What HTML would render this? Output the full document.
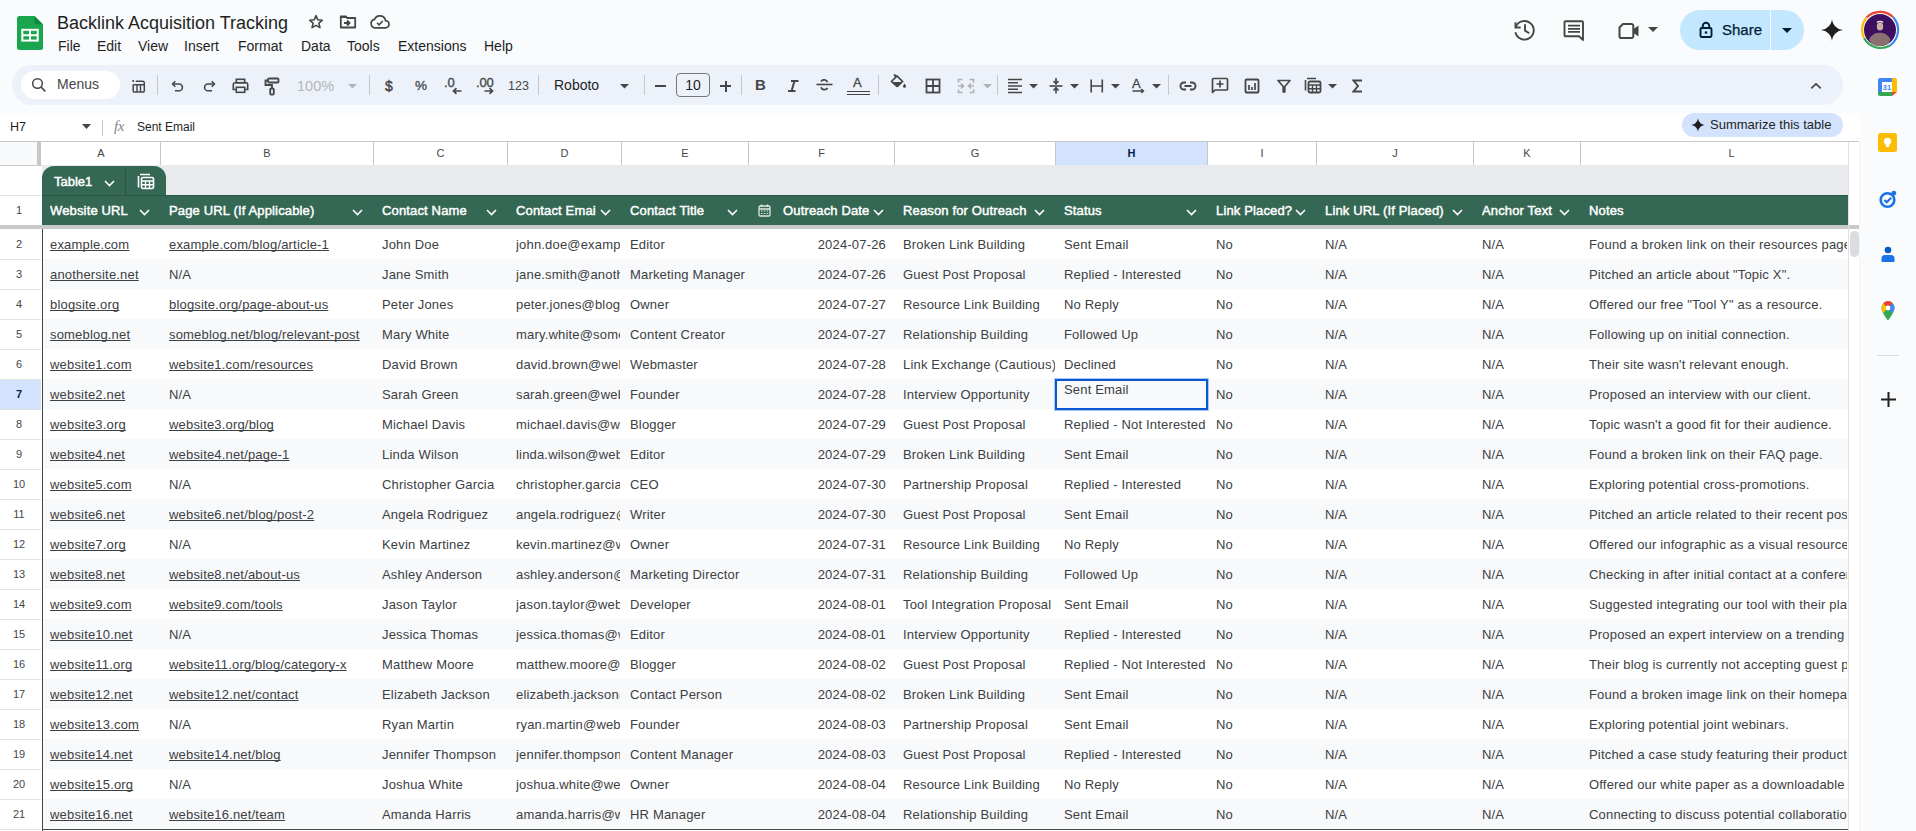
<!DOCTYPE html>
<html><head><meta charset="utf-8"><style>
*{margin:0;padding:0;box-sizing:border-box}
html,body{width:1916px;height:831px;overflow:hidden}
body{background:#f9fbfd;font-family:"Liberation Sans",sans-serif;position:relative;color:#1f1f1f}
.a{position:absolute}
.ch{top:142px;height:23px;line-height:23px;text-align:center;font-size:11px;color:#444746}
.chs{color:#041e49;font-weight:bold}
.rh{left:0;width:38px;height:30px;line-height:30px;text-align:center;font-size:11px;color:#444746}
.rhs{color:#041e49;font-weight:bold}
.tab{background:#356854;border-radius:12px 12px 0 0}
.tabt{height:30px;line-height:31px;font-size:13px;-webkit-text-stroke:0.45px #fff;color:#fff}
.hd{top:195px;height:30px;line-height:32px;font-size:13px;letter-spacing:0.15px;-webkit-text-stroke:0.45px #fff;color:#fff;white-space:nowrap;overflow:hidden}
.c{height:30px;line-height:32px;font-size:13px;letter-spacing:0.18px;color:#3c4043;white-space:nowrap;overflow:hidden}
.u span{text-decoration:underline;text-decoration-skip-ink:none}
.mi{top:36px;font-size:14px;line-height:20px;color:#1f1f1f}
.ic{stroke:#444746;fill:none;stroke-width:1.8}
</style></head><body>

<!-- logo -->
<svg class="a" style="left:17px;top:16px" width="26" height="34" viewBox="0 0 26 34"><path d="M2.5 0h15L26 8.5v23a2.5 2.5 0 0 1-2.5 2.5h-21A2.5 2.5 0 0 1 0 31.5v-29A2.5 2.5 0 0 1 2.5 0z" fill="#1aa64e"/><path d="M17.5 0L26 8.5h-6a2.5 2.5 0 0 1-2.5-2.5z" fill="#0c8a3c"/><rect x="5.3" y="13.8" width="15.4" height="10.8" fill="none" stroke="#fff" stroke-width="2"/><path d="M5 19.2h16M13 13.8v10.8" stroke="#fff" stroke-width="2"/></svg>
<div class="a" style="left:57px;top:11px;font-size:18px;line-height:24px;color:#1f1f1f">Backlink Acquisition Tracking</div>
<!-- star folder cloud -->
<svg class="a" style="left:307px;top:13px" width="18" height="18" viewBox="0 0 24 24"><path d="M12 3.5l2.4 5.6 6.1.5-4.6 4 1.4 6-5.3-3.2-5.3 3.2 1.4-6-4.6-4 6.1-.5z" fill="none" stroke="#444746" stroke-width="2.1" stroke-linejoin="round"/></svg>
<svg class="a" style="left:339px;top:15px" width="18" height="14" viewBox="0 0 18 14"><path d="M1.8 1.5h5l1.5 1.5h7.9v9.5H1.8z" fill="none" stroke="#444746" stroke-width="1.8" stroke-linejoin="round"/><path d="M1.8 1.5h5l1.5 1.5H1.8z" fill="#444746"/><path d="M5 8h4.5M8 5.5L10.5 8 8 10.5" fill="none" stroke="#444746" stroke-width="1.8"/></svg>
<svg class="a" style="left:370px;top:15px" width="20" height="14" viewBox="0 0 20 14"><path d="M5 12.8h10.2a3.6 3.6 0 0 0 .4-7.2A5.8 5.8 0 0 0 4.6 4.3 4.3 4.3 0 0 0 5 12.8z" fill="none" stroke="#444746" stroke-width="1.7"/><path d="M7 7.8l2 2 3.8-3.8" fill="none" stroke="#444746" stroke-width="1.6"/></svg>
<!-- menu -->
<div class="a mi" style="left:58px">File</div>
<div class="a mi" style="left:97px">Edit</div>
<div class="a mi" style="left:138px">View</div>
<div class="a mi" style="left:184px">Insert</div>
<div class="a mi" style="left:238px">Format</div>
<div class="a mi" style="left:301px">Data</div>
<div class="a mi" style="left:347px">Tools</div>
<div class="a mi" style="left:398px">Extensions</div>
<div class="a mi" style="left:484px">Help</div>
<!-- right header -->
<svg class="a" style="left:1512px;top:18px" width="26" height="24" viewBox="0 0 26 24"><path d="M3.6 9.5A9.3 9.3 0 1 1 3.4 14.3" fill="none" stroke="#444746" stroke-width="1.9"/><path d="M3.5 4.2v5.3h5.2" fill="none" stroke="#444746" stroke-width="1.9"/><path d="M13 6.3v6.3l4.3 2.6" fill="none" stroke="#444746" stroke-width="1.9"/></svg>
<svg class="a" style="left:1563px;top:20px" width="22" height="22" viewBox="0 0 22 22"><path d="M2.5 1.2h16.5a1 1 0 0 1 1 1V20l-4-3.7H2.5a1 1 0 0 1-1-1V2.2a1 1 0 0 1 1-1z" fill="none" stroke="#444746" stroke-width="1.9" stroke-linejoin="round"/><path d="M5 5.7h12M5 8.8h12M5 11.9h12" stroke="#444746" stroke-width="1.7"/></svg>
<svg class="a" style="left:1618px;top:22px" width="24" height="18" viewBox="0 0 24 18"><path d="M5 2h8.5a1.8 1.8 0 0 1 1.8 1.8v10.4a1.8 1.8 0 0 1-1.8 1.8H3.3a1.8 1.8 0 0 1-1.8-1.8V5.5z" fill="none" stroke="#444746" stroke-width="2" stroke-linejoin="round"/><path d="M15.5 7l5-3.5v11l-5-3.5z" fill="#444746"/></svg>
<svg class="a" style="left:1648px;top:27px" width="10" height="5" viewBox="0 0 10 5"><path d="M0 0h10L5 5z" fill="#444746"/></svg>
<div class="a" style="left:1680px;top:10px;width:124px;height:40px;border-radius:20px;background:#c2e7ff"></div>
<div class="a" style="left:1770px;top:10px;width:1px;height:40px;background:#f9fbfd"></div>
<svg class="a" style="left:1699px;top:21px" width="14" height="17" viewBox="0 0 14 17"><rect x="1.5" y="7" width="11" height="9" rx="1.2" fill="none" stroke="#001d35" stroke-width="1.9"/><path d="M3.8 7V5a3.2 3.2 0 0 1 6.4 0v2" fill="none" stroke="#001d35" stroke-width="1.9"/><circle cx="7" cy="11.5" r="1.3" fill="#001d35"/></svg>
<div class="a" style="left:1722px;top:20px;font-size:15px;line-height:20px;color:#001d35;-webkit-text-stroke:0.25px #001d35">Share</div>
<svg class="a" style="left:1782px;top:28px" width="10" height="5" viewBox="0 0 10 5"><path d="M0 0h10L5 5z" fill="#001d35"/></svg>
<svg class="a" style="left:1821px;top:19px" width="22" height="22" viewBox="0 0 24 24"><path d="M12 0C12.6 6.5 17.5 11.4 24 12 17.5 12.6 12.6 17.5 12 24 11.4 17.5 6.5 12.6 0 12 6.5 11.4 11.4 6.5 12 0z" fill="#1f1f1f"/></svg>
<svg class="a" style="left:1860px;top:10px" width="40" height="40" viewBox="0 0 40 40"><path d="M6.5 7.5A19 19 0 0 1 33 7" stroke="#ea4335" stroke-width="2.2" fill="none"/><path d="M33 7A19 19 0 0 1 30 35.5" stroke="#4285f4" stroke-width="2.2" fill="none"/><path d="M30 35.5A19 19 0 0 1 4 28" stroke="#34a853" stroke-width="2.2" fill="none"/><path d="M4 28A19 19 0 0 1 6.5 7.5" stroke="#fbbc04" stroke-width="2.2" fill="none"/><circle cx="20" cy="20" r="16" fill="#3d0f5e"/><path d="M9 30c1-3 2.5-4.5 5-6 2-1 4-1.2 6-1.2s4.5.5 6 1.5c2.2 1.6 3.5 3 4.5 5.5L28 34a16 16 0 0 1-16 0z" fill="#8a7070"/><ellipse cx="20" cy="16.5" rx="3.2" ry="4" fill="#c8b0a8"/><path d="M17 12.5c1-1.5 5-1.5 6 0" stroke="#e0d8d4" stroke-width="1.5" fill="none"/></svg>


<div class="a" style="left:12px;top:65px;width:1831px;height:40px;border-radius:20px;background:#edf2fa"></div>
<div class="a" style="left:21px;top:71px;width:99px;height:28px;border-radius:14px;background:#fff"></div>
<svg class="a" style="left:31px;top:77px" width="16" height="16" viewBox="0 0 16 16"><circle cx="6.5" cy="6.5" r="4.8" fill="none" stroke="#444746" stroke-width="1.5"/><path d="M10 10l4.3 4.3" stroke="#444746" stroke-width="1.7"/></svg>
<div class="a" style="left:57px;top:75px;font-size:14px;line-height:18px;color:#444746">Menus</div>
<svg class="a" style="left:131px;top:79px" width="15" height="14" viewBox="0 0 15 14"><circle cx="2.2" cy="2" r="1.1" fill="#444746"/><path d="M4.8 2.3h6.7a1.8 1.8 0 0 1 1.8 1.8v8a.8.8 0 0 1-.8.8H3a.8.8 0 0 1-.8-.8V5.6" fill="none" stroke="#444746" stroke-width="1.5"/><path d="M2.2 5.8h11M6 5.8v7M9.5 5.8v7" fill="none" stroke="#444746" stroke-width="1.4"/></svg>
<div class="a" style="left:157px;top:75px;width:1px;height:20px;background:#c7c7c7"></div>
<svg class="a" style="left:171px;top:80px" width="13" height="13" viewBox="0 0 13 13"><path d="M4.3 1.2L1.5 4l2.8 2.8" fill="none" stroke="#444746" stroke-width="1.6" stroke-linejoin="round"/><path d="M2 4h6a3.4 3.4 0 0 1 0 6.8H4" fill="none" stroke="#444746" stroke-width="1.6"/></svg>
<svg class="a" style="left:203px;top:80px" width="13" height="13" viewBox="0 0 13 13"><path d="M8.7 1.2L11.5 4 8.7 6.8" fill="none" stroke="#444746" stroke-width="1.6" stroke-linejoin="round"/><path d="M11 4H5a3.4 3.4 0 0 0 0 6.8h4" fill="none" stroke="#444746" stroke-width="1.6"/></svg>
<svg class="a" style="left:232px;top:78px" width="17" height="16" viewBox="0 0 17 16"><rect x="4.3" y="1.3" width="8.4" height="3.4" fill="none" stroke="#444746" stroke-width="1.6"/><path d="M3.8 11.5H1.3V6.2a1.4 1.4 0 0 1 1.4-1.4h11.6a1.4 1.4 0 0 1 1.4 1.4v5.3h-2.5" fill="none" stroke="#444746" stroke-width="1.6"/><rect x="4.3" y="9.3" width="8.4" height="5" fill="none" stroke="#444746" stroke-width="1.6"/></svg>
<svg class="a" style="left:264px;top:77px" width="16" height="19" viewBox="0 0 16 19"><rect x="4" y="1.5" width="10.5" height="4" rx="1" fill="none" stroke="#444746" stroke-width="1.8"/><path d="M4 3.5H1.5v4.5H8v3.5" fill="none" stroke="#444746" stroke-width="1.8"/><rect x="6.2" y="11.5" width="3.6" height="6" rx="1" fill="none" stroke="#444746" stroke-width="1.8"/></svg>
<div class="a" style="left:297px;top:77px;font-size:14.5px;line-height:18px;color:#b3b6b9">100%</div>
<svg class="a" style="left:348px;top:84px" width="9" height="5" viewBox="0 0 9 5"><path d="M0 0h9L4.5 4.5z" fill="#b3b6b9"/></svg>
<div class="a" style="left:369px;top:75px;width:1px;height:20px;background:#c7c7c7"></div>
<div class="a" style="left:385px;top:77px;font-size:14px;line-height:18px;color:#444746;-webkit-text-stroke:0.4px #444746">$</div>
<div class="a" style="left:415px;top:77px;font-size:13.5px;line-height:18px;color:#444746;-webkit-text-stroke:0.3px #444746">%</div>
<div class="a" style="left:444px;top:75px;font-size:13px;line-height:16px;color:#444746;-webkit-text-stroke:0.35px #444746">.0</div>
<svg class="a" style="left:452px;top:87px" width="10" height="8" viewBox="0 0 10 8"><path d="M9.5 4H2M4.5 1.2L1.5 4l3 2.8" fill="none" stroke="#444746" stroke-width="1.7"/></svg>
<div class="a" style="left:476px;top:75px;font-size:13px;line-height:16px;color:#444746;-webkit-text-stroke:0.35px #444746;letter-spacing:-0.2px">.00</div>
<svg class="a" style="left:484px;top:87px" width="10" height="8" viewBox="0 0 10 8"><path d="M0.5 4H8M5.5 1.2L8.5 4l-3 2.8" fill="none" stroke="#444746" stroke-width="1.7"/></svg>
<div class="a" style="left:508px;top:77px;font-size:12.5px;line-height:18px;color:#444746">123</div>
<div class="a" style="left:538px;top:75px;width:1px;height:20px;background:#c7c7c7"></div>
<div class="a" style="left:554px;top:76px;font-size:14px;line-height:18px;color:#1f1f1f">Roboto</div>
<svg class="a" style="left:620px;top:84px" width="9" height="5" viewBox="0 0 9 5"><path d="M0 0h9L4.5 4.5z" fill="#444746"/></svg>
<div class="a" style="left:644px;top:75px;width:1px;height:20px;background:#c7c7c7"></div>
<div class="a" style="left:655px;top:85px;width:11px;height:2px;background:#444746"></div>
<div class="a" style="left:676px;top:73px;width:34px;height:24px;border:1px solid #747775;border-radius:4px;font-size:14px;line-height:22px;text-align:center;color:#1f1f1f">10</div>
<div class="a" style="left:720px;top:85px;width:11px;height:2px;background:#444746"></div>
<div class="a" style="left:724.5px;top:80.5px;width:2px;height:11px;background:#444746"></div>
<div class="a" style="left:741px;top:75px;width:1px;height:20px;background:#c7c7c7"></div>
<div class="a" style="left:755px;top:76px;font-size:15px;line-height:18px;color:#444746;font-weight:bold">B</div>
<svg class="a" style="left:787px;top:80px" width="12" height="12" viewBox="0 0 12 12"><path d="M4 1h7.5M1 11h7.5M7.5 1L4.5 11" fill="none" stroke="#444746" stroke-width="2"/></svg>
<svg class="a" style="left:816px;top:79px" width="17" height="13" viewBox="0 0 17 13"><path d="M0.5 5.5h16" stroke="#444746" stroke-width="1.6"/><path d="M11.5 3.2A3.5 3 0 0 0 5 2.5M5 8.2a3.5 3 0 0 0 6.6 0.6" fill="none" stroke="#444746" stroke-width="1.8"/></svg>
<div class="a" style="left:853px;top:76px;font-size:13px;line-height:13px;color:#444746;-webkit-text-stroke:0.3px #444746">A</div>
<div class="a" style="left:847px;top:90.5px;width:23px;height:4.5px;border-top:1.5px solid #444746;border-bottom:1.5px solid #444746"></div>
<div class="a" style="left:878px;top:75px;width:1px;height:20px;background:#c7c7c7"></div>
<svg class="a" style="left:890px;top:73px" width="17" height="16" viewBox="0 0 17 16"><path d="M4 1.5l2.5 2.5" stroke="#444746" stroke-width="1.8"/><path d="M1.5 8.5L7 3l5.5 5.5L8 13a1.2 1.2 0 0 1-1.7 0L1.5 8.5z" fill="none" stroke="#444746" stroke-width="1.7"/><path d="M2 9h10L8 13H6z" fill="#444746"/><path d="M14.5 10.5c1 1.3 1.5 2.2 1.5 2.8a1.5 1.5 0 0 1-3 0c0-.6.5-1.5 1.5-2.8z" fill="#444746"/></svg>
<svg class="a" style="left:925px;top:78px" width="16" height="16" viewBox="0 0 16 16"><rect x="1.5" y="1.5" width="13" height="13" fill="none" stroke="#444746" stroke-width="1.8"/><path d="M8 1.5v13M1.5 8h13" fill="none" stroke="#444746" stroke-width="1.8"/></svg>
<svg class="a" style="left:957px;top:78px" width="18" height="16" viewBox="0 0 18 16"><path d="M1.5 4.5V1.5h4M12.5 1.5h4v3M1.5 11.5v3h4M12.5 14.5h4v-3" fill="none" stroke="#b0b3b5" stroke-width="1.7"/><path d="M1 8h5M4 5.5L6.5 8 4 10.5M17 8h-5M14 5.5L11.5 8l2.5 2.5" fill="none" stroke="#b0b3b5" stroke-width="1.6"/></svg>
<svg class="a" style="left:983px;top:84px" width="9" height="5" viewBox="0 0 9 5"><path d="M0 0h9L4.5 4.5z" fill="#b0b3b5"/></svg>
<div class="a" style="left:997px;top:75px;width:1px;height:20px;background:#c7c7c7"></div>
<svg class="a" style="left:1007px;top:78px" width="16" height="16" viewBox="0 0 16 16"><path d="M1 1.5h14M1 4.8h10M1 8h14M1 11.2h10M1 14.5h14" stroke="#444746" stroke-width="1.6"/></svg>
<svg class="a" style="left:1029px;top:84px" width="9" height="5" viewBox="0 0 9 5"><path d="M0 0h9L4.5 4.5z" fill="#444746"/></svg>
<svg class="a" style="left:1049px;top:77px" width="14" height="17" viewBox="0 0 14 17"><path d="M0.5 9h13" stroke="#444746" stroke-width="1.6"/><path d="M7 1v5M4.5 4L7 6.8 9.5 4M7 16.5v-5M4.5 13.5L7 10.8l2.5 2.7" fill="none" stroke="#444746" stroke-width="1.6"/></svg>
<svg class="a" style="left:1070px;top:84px" width="9" height="5" viewBox="0 0 9 5"><path d="M0 0h9L4.5 4.5z" fill="#444746"/></svg>
<svg class="a" style="left:1090px;top:79px" width="14" height="14" viewBox="0 0 14 14"><path d="M1.2 0.5v13M12.3 0.5v13M1.2 7h11.1" stroke="#444746" stroke-width="1.6"/></svg>
<svg class="a" style="left:1111px;top:84px" width="9" height="5" viewBox="0 0 9 5"><path d="M0 0h9L4.5 4.5z" fill="#444746"/></svg>
<div class="a" style="left:1132px;top:77px;font-size:13px;line-height:13px;color:#444746;-webkit-text-stroke:0.3px #444746">A</div>
<svg class="a" style="left:1132px;top:88px" width="14" height="6" viewBox="0 0 14 6"><path d="M0.5 3h11M9.3 1L11.5 3 9.3 5" fill="none" stroke="#444746" stroke-width="1.4"/></svg>
<svg class="a" style="left:1152px;top:84px" width="9" height="5" viewBox="0 0 9 5"><path d="M0 0h9L4.5 4.5z" fill="#444746"/></svg>
<div class="a" style="left:1168px;top:75px;width:1px;height:20px;background:#c7c7c7"></div>
<svg class="a" style="left:1179px;top:81px" width="18" height="10" viewBox="0 0 18 10"><path d="M7 1.5H5a3.5 3.5 0 0 0 0 7h2M11 1.5h2a3.5 3.5 0 0 1 0 7h-2M5.5 5h7" fill="none" stroke="#444746" stroke-width="1.9"/></svg>
<svg class="a" style="left:1211px;top:77px" width="18" height="17" viewBox="0 0 18 17"><path d="M1.5 15.5V2.5a1 1 0 0 1 1-1h13a1 1 0 0 1 1 1V12a1 1 0 0 1-1 1H4z" fill="none" stroke="#444746" stroke-width="1.7" stroke-linejoin="round"/><path d="M9 3.5v7M5.5 7h7" stroke="#444746" stroke-width="1.7"/></svg>
<svg class="a" style="left:1244px;top:78px" width="16" height="16" viewBox="0 0 16 16"><rect x="1.5" y="1.5" width="13" height="13" rx="1" fill="none" stroke="#444746" stroke-width="1.8"/><path d="M5 7v5M8 9v3M11 5v7" stroke="#444746" stroke-width="1.7"/></svg>
<svg class="a" style="left:1277px;top:79px" width="14" height="14" viewBox="0 0 14 14"><path d="M1 1.5h12L7.8 7.5V13H6.2V7.5z" fill="none" stroke="#444746" stroke-width="1.7" stroke-linejoin="round"/></svg>
<svg class="a" style="left:1304px;top:77px" width="18" height="17" viewBox="0 0 18 17"><path d="M3 1.5h9M1.5 3v10.5" fill="none" stroke="#444746" stroke-width="1.6"/><rect x="4.5" y="4.5" width="12" height="11" rx="1.5" fill="none" stroke="#444746" stroke-width="1.8"/><path d="M4.5 8h12M8.5 8v7.5M12.5 8v7.5M4.5 11.7h12" stroke="#444746" stroke-width="1.4"/></svg>
<svg class="a" style="left:1328px;top:84px" width="9" height="5" viewBox="0 0 9 5"><path d="M0 0h9L4.5 4.5z" fill="#444746"/></svg>
<svg class="a" style="left:1352px;top:79px" width="11" height="14" viewBox="0 0 11 14"><path d="M10 1.5H1.5L6 7l-4.5 5.5H10" fill="none" stroke="#444746" stroke-width="1.9" stroke-linejoin="miter"/></svg>
<svg class="a" style="left:1810px;top:82px" width="12" height="8" viewBox="0 0 12 8"><path d="M1.2 6.3L6 1.8l4.8 4.5" fill="none" stroke="#444746" stroke-width="1.6"/></svg>
<div class="a" style="left:0;top:113px;width:1860px;height:28px;background:#fff"></div>
<div class="a" style="left:10px;top:119px;font-size:12.5px;line-height:16px;color:#1f1f1f">H7</div>
<svg class="a" style="left:82px;top:124px" width="9" height="5" viewBox="0 0 9 5"><path d="M0 0h9L4.5 5z" fill="#444746"/></svg>
<div class="a" style="left:102px;top:120px;width:1px;height:16px;background:#c7c7c7"></div>
<div class="a" style="left:114px;top:117px;font-size:15px;line-height:18px;color:#80868b;font-family:'Liberation Serif',serif;font-style:italic;letter-spacing:-0.5px">fx</div>
<div class="a" style="left:137px;top:119px;font-size:12px;line-height:16px;color:#1f1f1f">Sent Email</div>
<div class="a" style="left:1682px;top:113px;width:161px;height:24px;border-radius:12px;background:#d3e3fd"></div>
<svg class="a" style="left:1691px;top:118px" width="14" height="14" viewBox="0 0 24 24"><path d="M12 0C12.6 6.5 17.5 11.4 24 12 17.5 12.6 12.6 17.5 12 24 11.4 17.5 6.5 12.6 0 12 6.5 11.4 11.4 6.5 12 0z" fill="#1f1f1f"/></svg>
<div class="a" style="left:1710px;top:117px;font-size:13px;line-height:16px;color:#1f1f1f">Summarize this table</div>
<div class="a" style="left:0;top:141px;width:1860px;height:690px;background:#fff"></div>
<div class="a" style="left:0;top:142px;width:37px;height:23px;background:#f8f9fa"></div>
<div class="a" style="left:37px;top:142px;width:4px;height:23px;background:#c7c7c7"></div>
<div class="a" style="left:0;top:141px;width:1860px;height:1px;background:#c7c7c7"></div>
<div class="a" style="left:0;top:165px;width:1848px;height:1px;background:#c7c7c7"></div>
<div class="a ch" style="left:42px;width:118px;background:#fff"></div>
<div class="a ch" style="left:42px;width:118px">A</div>
<div class="a" style="left:160px;top:142px;width:1px;height:23px;background:#c7c7c7"></div>
<div class="a ch" style="left:161px;width:212px;background:#fff"></div>
<div class="a ch" style="left:161px;width:212px">B</div>
<div class="a" style="left:373px;top:142px;width:1px;height:23px;background:#c7c7c7"></div>
<div class="a ch" style="left:374px;width:133px;background:#fff"></div>
<div class="a ch" style="left:374px;width:133px">C</div>
<div class="a" style="left:507px;top:142px;width:1px;height:23px;background:#c7c7c7"></div>
<div class="a ch" style="left:508px;width:113px;background:#fff"></div>
<div class="a ch" style="left:508px;width:113px">D</div>
<div class="a" style="left:621px;top:142px;width:1px;height:23px;background:#c7c7c7"></div>
<div class="a ch" style="left:622px;width:126px;background:#fff"></div>
<div class="a ch" style="left:622px;width:126px">E</div>
<div class="a" style="left:748px;top:142px;width:1px;height:23px;background:#c7c7c7"></div>
<div class="a ch" style="left:749px;width:145px;background:#fff"></div>
<div class="a ch" style="left:749px;width:145px">F</div>
<div class="a" style="left:894px;top:142px;width:1px;height:23px;background:#c7c7c7"></div>
<div class="a ch" style="left:895px;width:160px;background:#fff"></div>
<div class="a ch" style="left:895px;width:160px">G</div>
<div class="a" style="left:1055px;top:142px;width:1px;height:23px;background:#c7c7c7"></div>
<div class="a ch chs" style="left:1056px;width:151px;background:#d3e3fd"></div>
<div class="a ch chs" style="left:1056px;width:151px">H</div>
<div class="a" style="left:1207px;top:142px;width:1px;height:23px;background:#c7c7c7"></div>
<div class="a ch" style="left:1208px;width:108px;background:#fff"></div>
<div class="a ch" style="left:1208px;width:108px">I</div>
<div class="a" style="left:1316px;top:142px;width:1px;height:23px;background:#c7c7c7"></div>
<div class="a ch" style="left:1317px;width:156px;background:#fff"></div>
<div class="a ch" style="left:1317px;width:156px">J</div>
<div class="a" style="left:1473px;top:142px;width:1px;height:23px;background:#c7c7c7"></div>
<div class="a ch" style="left:1474px;width:106px;background:#fff"></div>
<div class="a ch" style="left:1474px;width:106px">K</div>
<div class="a" style="left:1580px;top:142px;width:1px;height:23px;background:#c7c7c7"></div>
<div class="a ch" style="left:1581px;width:267px;background:#fff"></div>
<div class="a ch" style="left:1581px;width:301px">L</div>
<div class="a" style="left:1848px;top:142px;width:1px;height:23px;background:#c7c7c7"></div>
<div class="a" style="left:0;top:195px;width:41px;height:1px;background:#e1e1e1"></div>
<div class="a rh" style="top:195px">1</div>
<div class="a rh" style="top:229px">2</div>
<div class="a" style="left:0;top:259px;width:41px;height:1px;background:#e1e1e1"></div>
<div class="a rh" style="top:259px">3</div>
<div class="a" style="left:0;top:289px;width:41px;height:1px;background:#e1e1e1"></div>
<div class="a rh" style="top:289px">4</div>
<div class="a" style="left:0;top:319px;width:41px;height:1px;background:#e1e1e1"></div>
<div class="a rh" style="top:319px">5</div>
<div class="a" style="left:0;top:349px;width:41px;height:1px;background:#e1e1e1"></div>
<div class="a rh" style="top:349px">6</div>
<div class="a" style="left:0;top:379px;width:41px;height:1px;background:#e1e1e1"></div>
<div class="a" style="left:0;top:380px;width:41px;height:29px;background:#d3e3fd"></div>
<div class="a rh rhs" style="top:379px">7</div>
<div class="a" style="left:0;top:409px;width:41px;height:1px;background:#e1e1e1"></div>
<div class="a rh" style="top:409px">8</div>
<div class="a" style="left:0;top:439px;width:41px;height:1px;background:#e1e1e1"></div>
<div class="a rh" style="top:439px">9</div>
<div class="a" style="left:0;top:469px;width:41px;height:1px;background:#e1e1e1"></div>
<div class="a rh" style="top:469px">10</div>
<div class="a" style="left:0;top:499px;width:41px;height:1px;background:#e1e1e1"></div>
<div class="a rh" style="top:499px">11</div>
<div class="a" style="left:0;top:529px;width:41px;height:1px;background:#e1e1e1"></div>
<div class="a rh" style="top:529px">12</div>
<div class="a" style="left:0;top:559px;width:41px;height:1px;background:#e1e1e1"></div>
<div class="a rh" style="top:559px">13</div>
<div class="a" style="left:0;top:589px;width:41px;height:1px;background:#e1e1e1"></div>
<div class="a rh" style="top:589px">14</div>
<div class="a" style="left:0;top:619px;width:41px;height:1px;background:#e1e1e1"></div>
<div class="a rh" style="top:619px">15</div>
<div class="a" style="left:0;top:649px;width:41px;height:1px;background:#e1e1e1"></div>
<div class="a rh" style="top:649px">16</div>
<div class="a" style="left:0;top:679px;width:41px;height:1px;background:#e1e1e1"></div>
<div class="a rh" style="top:679px">17</div>
<div class="a" style="left:0;top:709px;width:41px;height:1px;background:#e1e1e1"></div>
<div class="a rh" style="top:709px">18</div>
<div class="a" style="left:0;top:739px;width:41px;height:1px;background:#e1e1e1"></div>
<div class="a rh" style="top:739px">19</div>
<div class="a" style="left:0;top:769px;width:41px;height:1px;background:#e1e1e1"></div>
<div class="a rh" style="top:769px">20</div>
<div class="a" style="left:0;top:799px;width:41px;height:1px;background:#e1e1e1"></div>
<div class="a rh" style="top:799px">21</div>
<div class="a" style="left:0;top:829px;width:41px;height:1px;background:#e1e1e1"></div>
<div class="a" style="left:42px;top:165px;width:1806px;height:30px;background:#e8eaed"></div>
<div class="a tab" style="left:42px;top:166px;width:124px;height:30px"></div>
<div class="a" style="left:125px;top:168px;width:1px;height:27px;background:#2a5541"></div>
<div class="a tabt" style="left:54px;top:166px">Table1</div>
<svg class="a" style="left:104px;top:180px" width="11" height="7" viewBox="0 0 11 7"><path d="M1 1l4.5 4.5L10 1" fill="none" stroke="#fff" stroke-width="1.6"/></svg>
<svg class="a" style="left:137px;top:173px" width="18" height="17" viewBox="0 0 18 17"><path d="M3 1.5h10M1.5 3v11.5" fill="none" stroke="#fff" stroke-width="1.6"/><rect x="4.5" y="4.5" width="12" height="11" rx="1.5" fill="none" stroke="#fff" stroke-width="1.6"/><path d="M4.5 8h12M8.5 8v7.5M12.5 8v7.5M4.5 11.7h12" stroke="#fff" stroke-width="1.4"/></svg>
<div class="a" style="left:42px;top:195px;width:1806px;height:31px;background:#356854;border-top:1px solid #2b5743"></div>
<div class="a hd" style="left:50px;width:87px">Website URL</div>
<svg class="a" style="left:139px;top:209px" width="11" height="7" viewBox="0 0 11 7"><path d="M1 1l4.5 4.5L10 1" fill="none" stroke="#fff" stroke-width="1.6"/></svg>
<div class="a hd" style="left:169px;width:181px">Page URL (If Applicable)</div>
<svg class="a" style="left:352px;top:209px" width="11" height="7" viewBox="0 0 11 7"><path d="M1 1l4.5 4.5L10 1" fill="none" stroke="#fff" stroke-width="1.6"/></svg>
<div class="a hd" style="left:382px;width:102px">Contact Name</div>
<svg class="a" style="left:486px;top:209px" width="11" height="7" viewBox="0 0 11 7"><path d="M1 1l4.5 4.5L10 1" fill="none" stroke="#fff" stroke-width="1.6"/></svg>
<div class="a hd" style="left:516px;width:82px">Contact Emai</div>
<svg class="a" style="left:600px;top:209px" width="11" height="7" viewBox="0 0 11 7"><path d="M1 1l4.5 4.5L10 1" fill="none" stroke="#fff" stroke-width="1.6"/></svg>
<div class="a hd" style="left:630px;width:95px">Contact Title</div>
<svg class="a" style="left:727px;top:209px" width="11" height="7" viewBox="0 0 11 7"><path d="M1 1l4.5 4.5L10 1" fill="none" stroke="#fff" stroke-width="1.6"/></svg>
<svg class="a" style="left:758px;top:204px" width="13" height="13" viewBox="0 0 13 13"><rect x="1" y="2" width="11" height="10" rx="1.2" fill="none" stroke="#dfe9e3" stroke-width="1.3"/><path d="M1 5h11M3.5 0.5v2.5M9.5 0.5v2.5" stroke="#dfe9e3" stroke-width="1.3"/><path d="M3 7h1.5M5.8 7h1.5M8.6 7h1.5M3 9.5h1.5M5.8 9.5h1.5M8.6 9.5h1.5" stroke="#dfe9e3" stroke-width="1.2"/></svg>
<div class="a hd" style="left:783px;width:88px">Outreach Date</div>
<svg class="a" style="left:873px;top:209px" width="11" height="7" viewBox="0 0 11 7"><path d="M1 1l4.5 4.5L10 1" fill="none" stroke="#fff" stroke-width="1.6"/></svg>
<div class="a hd" style="left:903px;width:129px">Reason for Outreach</div>
<svg class="a" style="left:1034px;top:209px" width="11" height="7" viewBox="0 0 11 7"><path d="M1 1l4.5 4.5L10 1" fill="none" stroke="#fff" stroke-width="1.6"/></svg>
<div class="a hd" style="left:1064px;width:120px">Status</div>
<svg class="a" style="left:1186px;top:209px" width="11" height="7" viewBox="0 0 11 7"><path d="M1 1l4.5 4.5L10 1" fill="none" stroke="#fff" stroke-width="1.6"/></svg>
<div class="a hd" style="left:1216px;width:77px">Link Placed?</div>
<svg class="a" style="left:1295px;top:209px" width="11" height="7" viewBox="0 0 11 7"><path d="M1 1l4.5 4.5L10 1" fill="none" stroke="#fff" stroke-width="1.6"/></svg>
<div class="a hd" style="left:1325px;width:125px">Link URL (If Placed)</div>
<svg class="a" style="left:1452px;top:209px" width="11" height="7" viewBox="0 0 11 7"><path d="M1 1l4.5 4.5L10 1" fill="none" stroke="#fff" stroke-width="1.6"/></svg>
<div class="a hd" style="left:1482px;width:75px">Anchor Text</div>
<svg class="a" style="left:1559px;top:209px" width="11" height="7" viewBox="0 0 11 7"><path d="M1 1l4.5 4.5L10 1" fill="none" stroke="#fff" stroke-width="1.6"/></svg>
<div class="a hd" style="left:1589px;width:259px">Notes</div>
<div class="a" style="left:0;top:225px;width:1860px;height:4px;background:#c9c9c9"></div>
<div class="a" style="left:43px;top:229px;width:1805px;height:30px;background:#ffffff"></div>
<div class="a c u" style="left:50px;top:229px;width:110px"><span>example.com</span></div>
<div class="a c u" style="left:169px;top:229px;width:204px"><span>example.com/blog/article-1</span></div>
<div class="a c" style="left:382px;top:229px;width:125px"><span>John Doe</span></div>
<div class="a c" style="left:516px;top:229px;width:104px"><span>john.doe@example.com</span></div>
<div class="a c" style="left:630px;top:229px;width:118px"><span>Editor</span></div>
<div class="a c" style="left:748px;top:229px;width:138px;text-align:right"><span>2024-07-26</span></div>
<div class="a c" style="left:903px;top:229px;width:152px"><span>Broken Link Building</span></div>
<div class="a c" style="left:1064px;top:229px;width:143px"><span>Sent Email</span></div>
<div class="a c" style="left:1216px;top:229px;width:100px"><span>No</span></div>
<div class="a c" style="left:1325px;top:229px;width:148px"><span>N/A</span></div>
<div class="a c" style="left:1482px;top:229px;width:98px"><span>N/A</span></div>
<div class="a c" style="left:1589px;top:229px;width:258px"><span>Found a broken link on their resources page.</span></div>
<div class="a" style="left:43px;top:259px;width:1805px;height:30px;background:#f8f9fa"></div>
<div class="a c u" style="left:50px;top:259px;width:110px"><span>anothersite.net</span></div>
<div class="a c" style="left:169px;top:259px;width:204px"><span>N/A</span></div>
<div class="a c" style="left:382px;top:259px;width:125px"><span>Jane Smith</span></div>
<div class="a c" style="left:516px;top:259px;width:104px"><span>jane.smith@anothersite.net</span></div>
<div class="a c" style="left:630px;top:259px;width:118px"><span>Marketing Manager</span></div>
<div class="a c" style="left:748px;top:259px;width:138px;text-align:right"><span>2024-07-26</span></div>
<div class="a c" style="left:903px;top:259px;width:152px"><span>Guest Post Proposal</span></div>
<div class="a c" style="left:1064px;top:259px;width:143px"><span>Replied - Interested</span></div>
<div class="a c" style="left:1216px;top:259px;width:100px"><span>No</span></div>
<div class="a c" style="left:1325px;top:259px;width:148px"><span>N/A</span></div>
<div class="a c" style="left:1482px;top:259px;width:98px"><span>N/A</span></div>
<div class="a c" style="left:1589px;top:259px;width:258px"><span>Pitched an article about &quot;Topic X&quot;.</span></div>
<div class="a" style="left:43px;top:289px;width:1805px;height:30px;background:#ffffff"></div>
<div class="a c u" style="left:50px;top:289px;width:110px"><span>blogsite.org</span></div>
<div class="a c u" style="left:169px;top:289px;width:204px"><span>blogsite.org/page-about-us</span></div>
<div class="a c" style="left:382px;top:289px;width:125px"><span>Peter Jones</span></div>
<div class="a c" style="left:516px;top:289px;width:104px"><span>peter.jones@blogsite.org</span></div>
<div class="a c" style="left:630px;top:289px;width:118px"><span>Owner</span></div>
<div class="a c" style="left:748px;top:289px;width:138px;text-align:right"><span>2024-07-27</span></div>
<div class="a c" style="left:903px;top:289px;width:152px"><span>Resource Link Building</span></div>
<div class="a c" style="left:1064px;top:289px;width:143px"><span>No Reply</span></div>
<div class="a c" style="left:1216px;top:289px;width:100px"><span>No</span></div>
<div class="a c" style="left:1325px;top:289px;width:148px"><span>N/A</span></div>
<div class="a c" style="left:1482px;top:289px;width:98px"><span>N/A</span></div>
<div class="a c" style="left:1589px;top:289px;width:258px"><span>Offered our free &quot;Tool Y&quot; as a resource.</span></div>
<div class="a" style="left:43px;top:319px;width:1805px;height:30px;background:#f8f9fa"></div>
<div class="a c u" style="left:50px;top:319px;width:110px"><span>someblog.net</span></div>
<div class="a c u" style="left:169px;top:319px;width:204px"><span>someblog.net/blog/relevant-post</span></div>
<div class="a c" style="left:382px;top:319px;width:125px"><span>Mary White</span></div>
<div class="a c" style="left:516px;top:319px;width:104px"><span>mary.white@someblog.net</span></div>
<div class="a c" style="left:630px;top:319px;width:118px"><span>Content Creator</span></div>
<div class="a c" style="left:748px;top:319px;width:138px;text-align:right"><span>2024-07-27</span></div>
<div class="a c" style="left:903px;top:319px;width:152px"><span>Relationship Building</span></div>
<div class="a c" style="left:1064px;top:319px;width:143px"><span>Followed Up</span></div>
<div class="a c" style="left:1216px;top:319px;width:100px"><span>No</span></div>
<div class="a c" style="left:1325px;top:319px;width:148px"><span>N/A</span></div>
<div class="a c" style="left:1482px;top:319px;width:98px"><span>N/A</span></div>
<div class="a c" style="left:1589px;top:319px;width:258px"><span>Following up on initial connection.</span></div>
<div class="a" style="left:43px;top:349px;width:1805px;height:30px;background:#ffffff"></div>
<div class="a c u" style="left:50px;top:349px;width:110px"><span>website1.com</span></div>
<div class="a c u" style="left:169px;top:349px;width:204px"><span>website1.com/resources</span></div>
<div class="a c" style="left:382px;top:349px;width:125px"><span>David Brown</span></div>
<div class="a c" style="left:516px;top:349px;width:104px"><span>david.brown@website1.com</span></div>
<div class="a c" style="left:630px;top:349px;width:118px"><span>Webmaster</span></div>
<div class="a c" style="left:748px;top:349px;width:138px;text-align:right"><span>2024-07-28</span></div>
<div class="a c" style="left:903px;top:349px;width:152px"><span>Link Exchange (Cautious)</span></div>
<div class="a c" style="left:1064px;top:349px;width:143px"><span>Declined</span></div>
<div class="a c" style="left:1216px;top:349px;width:100px"><span>No</span></div>
<div class="a c" style="left:1325px;top:349px;width:148px"><span>N/A</span></div>
<div class="a c" style="left:1482px;top:349px;width:98px"><span>N/A</span></div>
<div class="a c" style="left:1589px;top:349px;width:258px"><span>Their site wasn't relevant enough.</span></div>
<div class="a" style="left:43px;top:379px;width:1805px;height:30px;background:#f8f9fa"></div>
<div class="a c u" style="left:50px;top:379px;width:110px"><span>website2.net</span></div>
<div class="a c" style="left:169px;top:379px;width:204px"><span>N/A</span></div>
<div class="a c" style="left:382px;top:379px;width:125px"><span>Sarah Green</span></div>
<div class="a c" style="left:516px;top:379px;width:104px"><span>sarah.green@website2.net</span></div>
<div class="a c" style="left:630px;top:379px;width:118px"><span>Founder</span></div>
<div class="a c" style="left:748px;top:379px;width:138px;text-align:right"><span>2024-07-28</span></div>
<div class="a c" style="left:903px;top:379px;width:152px"><span>Interview Opportunity</span></div>
<div class="a c" style="left:1064px;top:379px;width:143px;line-height:22px"><span>Sent Email</span></div>
<div class="a c" style="left:1216px;top:379px;width:100px"><span>No</span></div>
<div class="a c" style="left:1325px;top:379px;width:148px"><span>N/A</span></div>
<div class="a c" style="left:1482px;top:379px;width:98px"><span>N/A</span></div>
<div class="a c" style="left:1589px;top:379px;width:258px"><span>Proposed an interview with our client.</span></div>
<div class="a" style="left:43px;top:409px;width:1805px;height:30px;background:#ffffff"></div>
<div class="a c u" style="left:50px;top:409px;width:110px"><span>website3.org</span></div>
<div class="a c u" style="left:169px;top:409px;width:204px"><span>website3.org/blog</span></div>
<div class="a c" style="left:382px;top:409px;width:125px"><span>Michael Davis</span></div>
<div class="a c" style="left:516px;top:409px;width:104px"><span>michael.davis@website3.org</span></div>
<div class="a c" style="left:630px;top:409px;width:118px"><span>Blogger</span></div>
<div class="a c" style="left:748px;top:409px;width:138px;text-align:right"><span>2024-07-29</span></div>
<div class="a c" style="left:903px;top:409px;width:152px"><span>Guest Post Proposal</span></div>
<div class="a c" style="left:1064px;top:409px;width:143px"><span>Replied - Not Interested</span></div>
<div class="a c" style="left:1216px;top:409px;width:100px"><span>No</span></div>
<div class="a c" style="left:1325px;top:409px;width:148px"><span>N/A</span></div>
<div class="a c" style="left:1482px;top:409px;width:98px"><span>N/A</span></div>
<div class="a c" style="left:1589px;top:409px;width:258px"><span>Topic wasn't a good fit for their audience.</span></div>
<div class="a" style="left:43px;top:439px;width:1805px;height:30px;background:#f8f9fa"></div>
<div class="a c u" style="left:50px;top:439px;width:110px"><span>website4.net</span></div>
<div class="a c u" style="left:169px;top:439px;width:204px"><span>website4.net/page-1</span></div>
<div class="a c" style="left:382px;top:439px;width:125px"><span>Linda Wilson</span></div>
<div class="a c" style="left:516px;top:439px;width:104px"><span>linda.wilson@website4.net</span></div>
<div class="a c" style="left:630px;top:439px;width:118px"><span>Editor</span></div>
<div class="a c" style="left:748px;top:439px;width:138px;text-align:right"><span>2024-07-29</span></div>
<div class="a c" style="left:903px;top:439px;width:152px"><span>Broken Link Building</span></div>
<div class="a c" style="left:1064px;top:439px;width:143px"><span>Sent Email</span></div>
<div class="a c" style="left:1216px;top:439px;width:100px"><span>No</span></div>
<div class="a c" style="left:1325px;top:439px;width:148px"><span>N/A</span></div>
<div class="a c" style="left:1482px;top:439px;width:98px"><span>N/A</span></div>
<div class="a c" style="left:1589px;top:439px;width:258px"><span>Found a broken link on their FAQ page.</span></div>
<div class="a" style="left:43px;top:469px;width:1805px;height:30px;background:#ffffff"></div>
<div class="a c u" style="left:50px;top:469px;width:110px"><span>website5.com</span></div>
<div class="a c" style="left:169px;top:469px;width:204px"><span>N/A</span></div>
<div class="a c" style="left:382px;top:469px;width:125px"><span>Christopher Garcia</span></div>
<div class="a c" style="left:516px;top:469px;width:104px"><span>christopher.garcia@website5.com</span></div>
<div class="a c" style="left:630px;top:469px;width:118px"><span>CEO</span></div>
<div class="a c" style="left:748px;top:469px;width:138px;text-align:right"><span>2024-07-30</span></div>
<div class="a c" style="left:903px;top:469px;width:152px"><span>Partnership Proposal</span></div>
<div class="a c" style="left:1064px;top:469px;width:143px"><span>Replied - Interested</span></div>
<div class="a c" style="left:1216px;top:469px;width:100px"><span>No</span></div>
<div class="a c" style="left:1325px;top:469px;width:148px"><span>N/A</span></div>
<div class="a c" style="left:1482px;top:469px;width:98px"><span>N/A</span></div>
<div class="a c" style="left:1589px;top:469px;width:258px"><span>Exploring potential cross-promotions.</span></div>
<div class="a" style="left:43px;top:499px;width:1805px;height:30px;background:#f8f9fa"></div>
<div class="a c u" style="left:50px;top:499px;width:110px"><span>website6.net</span></div>
<div class="a c u" style="left:169px;top:499px;width:204px"><span>website6.net/blog/post-2</span></div>
<div class="a c" style="left:382px;top:499px;width:125px"><span>Angela Rodriguez</span></div>
<div class="a c" style="left:516px;top:499px;width:104px"><span>angela.rodriguez@website6.net</span></div>
<div class="a c" style="left:630px;top:499px;width:118px"><span>Writer</span></div>
<div class="a c" style="left:748px;top:499px;width:138px;text-align:right"><span>2024-07-30</span></div>
<div class="a c" style="left:903px;top:499px;width:152px"><span>Guest Post Proposal</span></div>
<div class="a c" style="left:1064px;top:499px;width:143px"><span>Sent Email</span></div>
<div class="a c" style="left:1216px;top:499px;width:100px"><span>No</span></div>
<div class="a c" style="left:1325px;top:499px;width:148px"><span>N/A</span></div>
<div class="a c" style="left:1482px;top:499px;width:98px"><span>N/A</span></div>
<div class="a c" style="left:1589px;top:499px;width:258px"><span>Pitched an article related to their recent post.</span></div>
<div class="a" style="left:43px;top:529px;width:1805px;height:30px;background:#ffffff"></div>
<div class="a c u" style="left:50px;top:529px;width:110px"><span>website7.org</span></div>
<div class="a c" style="left:169px;top:529px;width:204px"><span>N/A</span></div>
<div class="a c" style="left:382px;top:529px;width:125px"><span>Kevin Martinez</span></div>
<div class="a c" style="left:516px;top:529px;width:104px"><span>kevin.martinez@website7.org</span></div>
<div class="a c" style="left:630px;top:529px;width:118px"><span>Owner</span></div>
<div class="a c" style="left:748px;top:529px;width:138px;text-align:right"><span>2024-07-31</span></div>
<div class="a c" style="left:903px;top:529px;width:152px"><span>Resource Link Building</span></div>
<div class="a c" style="left:1064px;top:529px;width:143px"><span>No Reply</span></div>
<div class="a c" style="left:1216px;top:529px;width:100px"><span>No</span></div>
<div class="a c" style="left:1325px;top:529px;width:148px"><span>N/A</span></div>
<div class="a c" style="left:1482px;top:529px;width:98px"><span>N/A</span></div>
<div class="a c" style="left:1589px;top:529px;width:258px"><span>Offered our infographic as a visual resource.</span></div>
<div class="a" style="left:43px;top:559px;width:1805px;height:30px;background:#f8f9fa"></div>
<div class="a c u" style="left:50px;top:559px;width:110px"><span>website8.net</span></div>
<div class="a c u" style="left:169px;top:559px;width:204px"><span>website8.net/about-us</span></div>
<div class="a c" style="left:382px;top:559px;width:125px"><span>Ashley Anderson</span></div>
<div class="a c" style="left:516px;top:559px;width:104px"><span>ashley.anderson@website8.net</span></div>
<div class="a c" style="left:630px;top:559px;width:118px"><span>Marketing Director</span></div>
<div class="a c" style="left:748px;top:559px;width:138px;text-align:right"><span>2024-07-31</span></div>
<div class="a c" style="left:903px;top:559px;width:152px"><span>Relationship Building</span></div>
<div class="a c" style="left:1064px;top:559px;width:143px"><span>Followed Up</span></div>
<div class="a c" style="left:1216px;top:559px;width:100px"><span>No</span></div>
<div class="a c" style="left:1325px;top:559px;width:148px"><span>N/A</span></div>
<div class="a c" style="left:1482px;top:559px;width:98px"><span>N/A</span></div>
<div class="a c" style="left:1589px;top:559px;width:258px"><span>Checking in after initial contact at a conference.</span></div>
<div class="a" style="left:43px;top:589px;width:1805px;height:30px;background:#ffffff"></div>
<div class="a c u" style="left:50px;top:589px;width:110px"><span>website9.com</span></div>
<div class="a c u" style="left:169px;top:589px;width:204px"><span>website9.com/tools</span></div>
<div class="a c" style="left:382px;top:589px;width:125px"><span>Jason Taylor</span></div>
<div class="a c" style="left:516px;top:589px;width:104px"><span>jason.taylor@website9.com</span></div>
<div class="a c" style="left:630px;top:589px;width:118px"><span>Developer</span></div>
<div class="a c" style="left:748px;top:589px;width:138px;text-align:right"><span>2024-08-01</span></div>
<div class="a c" style="left:903px;top:589px;width:152px"><span>Tool Integration Proposal</span></div>
<div class="a c" style="left:1064px;top:589px;width:143px"><span>Sent Email</span></div>
<div class="a c" style="left:1216px;top:589px;width:100px"><span>No</span></div>
<div class="a c" style="left:1325px;top:589px;width:148px"><span>N/A</span></div>
<div class="a c" style="left:1482px;top:589px;width:98px"><span>N/A</span></div>
<div class="a c" style="left:1589px;top:589px;width:258px"><span>Suggested integrating our tool with their platform.</span></div>
<div class="a" style="left:43px;top:619px;width:1805px;height:30px;background:#f8f9fa"></div>
<div class="a c u" style="left:50px;top:619px;width:110px"><span>website10.net</span></div>
<div class="a c" style="left:169px;top:619px;width:204px"><span>N/A</span></div>
<div class="a c" style="left:382px;top:619px;width:125px"><span>Jessica Thomas</span></div>
<div class="a c" style="left:516px;top:619px;width:104px"><span>jessica.thomas@website10.net</span></div>
<div class="a c" style="left:630px;top:619px;width:118px"><span>Editor</span></div>
<div class="a c" style="left:748px;top:619px;width:138px;text-align:right"><span>2024-08-01</span></div>
<div class="a c" style="left:903px;top:619px;width:152px"><span>Interview Opportunity</span></div>
<div class="a c" style="left:1064px;top:619px;width:143px"><span>Replied - Interested</span></div>
<div class="a c" style="left:1216px;top:619px;width:100px"><span>No</span></div>
<div class="a c" style="left:1325px;top:619px;width:148px"><span>N/A</span></div>
<div class="a c" style="left:1482px;top:619px;width:98px"><span>N/A</span></div>
<div class="a c" style="left:1589px;top:619px;width:258px"><span>Proposed an expert interview on a trending topic.</span></div>
<div class="a" style="left:43px;top:649px;width:1805px;height:30px;background:#ffffff"></div>
<div class="a c u" style="left:50px;top:649px;width:110px"><span>website11.org</span></div>
<div class="a c u" style="left:169px;top:649px;width:204px"><span>website11.org/blog/category-x</span></div>
<div class="a c" style="left:382px;top:649px;width:125px"><span>Matthew Moore</span></div>
<div class="a c" style="left:516px;top:649px;width:104px"><span>matthew.moore@website11.org</span></div>
<div class="a c" style="left:630px;top:649px;width:118px"><span>Blogger</span></div>
<div class="a c" style="left:748px;top:649px;width:138px;text-align:right"><span>2024-08-02</span></div>
<div class="a c" style="left:903px;top:649px;width:152px"><span>Guest Post Proposal</span></div>
<div class="a c" style="left:1064px;top:649px;width:143px"><span>Replied - Not Interested</span></div>
<div class="a c" style="left:1216px;top:649px;width:100px"><span>No</span></div>
<div class="a c" style="left:1325px;top:649px;width:148px"><span>N/A</span></div>
<div class="a c" style="left:1482px;top:649px;width:98px"><span>N/A</span></div>
<div class="a c" style="left:1589px;top:649px;width:258px"><span>Their blog is currently not accepting guest posts.</span></div>
<div class="a" style="left:43px;top:679px;width:1805px;height:30px;background:#f8f9fa"></div>
<div class="a c u" style="left:50px;top:679px;width:110px"><span>website12.net</span></div>
<div class="a c u" style="left:169px;top:679px;width:204px"><span>website12.net/contact</span></div>
<div class="a c" style="left:382px;top:679px;width:125px"><span>Elizabeth Jackson</span></div>
<div class="a c" style="left:516px;top:679px;width:104px"><span>elizabeth.jackson@website12.net</span></div>
<div class="a c" style="left:630px;top:679px;width:118px"><span>Contact Person</span></div>
<div class="a c" style="left:748px;top:679px;width:138px;text-align:right"><span>2024-08-02</span></div>
<div class="a c" style="left:903px;top:679px;width:152px"><span>Broken Link Building</span></div>
<div class="a c" style="left:1064px;top:679px;width:143px"><span>Sent Email</span></div>
<div class="a c" style="left:1216px;top:679px;width:100px"><span>No</span></div>
<div class="a c" style="left:1325px;top:679px;width:148px"><span>N/A</span></div>
<div class="a c" style="left:1482px;top:679px;width:98px"><span>N/A</span></div>
<div class="a c" style="left:1589px;top:679px;width:258px"><span>Found a broken image link on their homepage.</span></div>
<div class="a" style="left:43px;top:709px;width:1805px;height:30px;background:#ffffff"></div>
<div class="a c u" style="left:50px;top:709px;width:110px"><span>website13.com</span></div>
<div class="a c" style="left:169px;top:709px;width:204px"><span>N/A</span></div>
<div class="a c" style="left:382px;top:709px;width:125px"><span>Ryan Martin</span></div>
<div class="a c" style="left:516px;top:709px;width:104px"><span>ryan.martin@website13.com</span></div>
<div class="a c" style="left:630px;top:709px;width:118px"><span>Founder</span></div>
<div class="a c" style="left:748px;top:709px;width:138px;text-align:right"><span>2024-08-03</span></div>
<div class="a c" style="left:903px;top:709px;width:152px"><span>Partnership Proposal</span></div>
<div class="a c" style="left:1064px;top:709px;width:143px"><span>Sent Email</span></div>
<div class="a c" style="left:1216px;top:709px;width:100px"><span>No</span></div>
<div class="a c" style="left:1325px;top:709px;width:148px"><span>N/A</span></div>
<div class="a c" style="left:1482px;top:709px;width:98px"><span>N/A</span></div>
<div class="a c" style="left:1589px;top:709px;width:258px"><span>Exploring potential joint webinars.</span></div>
<div class="a" style="left:43px;top:739px;width:1805px;height:30px;background:#f8f9fa"></div>
<div class="a c u" style="left:50px;top:739px;width:110px"><span>website14.net</span></div>
<div class="a c u" style="left:169px;top:739px;width:204px"><span>website14.net/blog</span></div>
<div class="a c" style="left:382px;top:739px;width:125px"><span>Jennifer Thompson</span></div>
<div class="a c" style="left:516px;top:739px;width:104px"><span>jennifer.thompson@website14.net</span></div>
<div class="a c" style="left:630px;top:739px;width:118px"><span>Content Manager</span></div>
<div class="a c" style="left:748px;top:739px;width:138px;text-align:right"><span>2024-08-03</span></div>
<div class="a c" style="left:903px;top:739px;width:152px"><span>Guest Post Proposal</span></div>
<div class="a c" style="left:1064px;top:739px;width:143px"><span>Replied - Interested</span></div>
<div class="a c" style="left:1216px;top:739px;width:100px"><span>No</span></div>
<div class="a c" style="left:1325px;top:739px;width:148px"><span>N/A</span></div>
<div class="a c" style="left:1482px;top:739px;width:98px"><span>N/A</span></div>
<div class="a c" style="left:1589px;top:739px;width:258px"><span>Pitched a case study featuring their product.</span></div>
<div class="a" style="left:43px;top:769px;width:1805px;height:30px;background:#ffffff"></div>
<div class="a c u" style="left:50px;top:769px;width:110px"><span>website15.org</span></div>
<div class="a c" style="left:169px;top:769px;width:204px"><span>N/A</span></div>
<div class="a c" style="left:382px;top:769px;width:125px"><span>Joshua White</span></div>
<div class="a c" style="left:516px;top:769px;width:104px"><span>joshua.white@website15.org</span></div>
<div class="a c" style="left:630px;top:769px;width:118px"><span>Owner</span></div>
<div class="a c" style="left:748px;top:769px;width:138px;text-align:right"><span>2024-08-04</span></div>
<div class="a c" style="left:903px;top:769px;width:152px"><span>Resource Link Building</span></div>
<div class="a c" style="left:1064px;top:769px;width:143px"><span>No Reply</span></div>
<div class="a c" style="left:1216px;top:769px;width:100px"><span>No</span></div>
<div class="a c" style="left:1325px;top:769px;width:148px"><span>N/A</span></div>
<div class="a c" style="left:1482px;top:769px;width:98px"><span>N/A</span></div>
<div class="a c" style="left:1589px;top:769px;width:258px"><span>Offered our white paper as a downloadable resource.</span></div>
<div class="a" style="left:43px;top:799px;width:1805px;height:30px;background:#f8f9fa"></div>
<div class="a c u" style="left:50px;top:799px;width:110px"><span>website16.net</span></div>
<div class="a c u" style="left:169px;top:799px;width:204px"><span>website16.net/team</span></div>
<div class="a c" style="left:382px;top:799px;width:125px"><span>Amanda Harris</span></div>
<div class="a c" style="left:516px;top:799px;width:104px"><span>amanda.harris@website16.net</span></div>
<div class="a c" style="left:630px;top:799px;width:118px"><span>HR Manager</span></div>
<div class="a c" style="left:748px;top:799px;width:138px;text-align:right"><span>2024-08-04</span></div>
<div class="a c" style="left:903px;top:799px;width:152px"><span>Relationship Building</span></div>
<div class="a c" style="left:1064px;top:799px;width:143px"><span>Sent Email</span></div>
<div class="a c" style="left:1216px;top:799px;width:100px"><span>No</span></div>
<div class="a c" style="left:1325px;top:799px;width:148px"><span>N/A</span></div>
<div class="a c" style="left:1482px;top:799px;width:98px"><span>N/A</span></div>
<div class="a c" style="left:1589px;top:799px;width:258px"><span>Connecting to discuss potential collaboration.</span></div>
<div class="a" style="left:42px;top:229px;width:1px;height:602px;background:#3b4a43"></div>
<div class="a" style="left:42px;top:829px;width:1806px;height:1px;background:#3f4f48"></div>
<div class="a" style="left:1054px;top:378px;width:155px;height:33px;border:1px solid #a8c7fa"></div>
<div class="a" style="left:1055px;top:379px;width:153px;height:31px;border:2px solid #0b57d0"></div>
<div class="a" style="left:1848px;top:142px;width:1px;height:689px;background:#e1e1e1"></div>
<div class="a" style="left:1849px;top:229px;width:11px;height:602px;background:#fff"></div>
<div class="a" style="left:1850px;top:231px;width:9px;height:26px;border-radius:5px;background:#dadce0"></div>
<div class="a" style="left:1859px;top:141px;width:1px;height:690px;background:#f1f3f4"></div>

<!-- side panel -->
<svg class="a" style="left:1878px;top:78px" width="19" height="18" viewBox="0 0 19 18"><path d="M0 2a2 2 0 0 1 2-2h12v4H4v10H0z" fill="#4285f4"/><path d="M14 0h3a2 2 0 0 1 2 2v12h-5z" fill="#fbbc04"/><path d="M0 14h14v4H2a2 2 0 0 1-2-2z" fill="#34a853"/><path d="M14 14h5l-5 4z" fill="#ea4335"/><rect x="4" y="4" width="10" height="10" fill="#fff"/><text x="9" y="12.3" font-size="7.5" font-family="Liberation Sans" font-weight="bold" fill="#4285f4" text-anchor="middle">31</text></svg>
<svg class="a" style="left:1878px;top:133px" width="19" height="19" viewBox="0 0 19 19"><rect x="0" y="0" width="19" height="19" rx="2.5" fill="#fbbc04"/><circle cx="9.5" cy="8.3" r="3.6" fill="#fff"/><rect x="7.8" y="11" width="3.4" height="3" fill="#fff"/></svg>
<svg class="a" style="left:1879px;top:190px" width="18" height="19" viewBox="0 0 18 19"><circle cx="8.5" cy="10" r="6.8" fill="none" stroke="#1a73e8" stroke-width="2.6"/><path d="M5.3 10l2.4 2.3 4.5-4.6" fill="none" stroke="#1a73e8" stroke-width="2.2"/><circle cx="14.8" cy="3.2" r="2.4" fill="#1a73e8"/></svg>
<svg class="a" style="left:1881px;top:246px" width="14" height="17" viewBox="0 0 14 17"><circle cx="7" cy="4" r="3.3" fill="#0b57d0"/><path d="M0.5 16v-3.5A3.5 3.5 0 0 1 4 9h6a3.5 3.5 0 0 1 3.5 3.5V16z" fill="#1a73e8"/></svg>
<svg class="a" style="left:1881px;top:301px" width="14" height="20" viewBox="0 0 14 20"><path d="M7 0.5A6.5 6.5 0 0 0 0.5 7c0 4.5 6.5 12.5 6.5 12.5S13.5 11.5 13.5 7A6.5 6.5 0 0 0 7 0.5z" fill="#34a853"/><path d="M2.2 2.2A6.5 6.5 0 0 0 0.5 7c0 1.5.7 3.3 1.7 5L7 7z" fill="#fbbc04"/><path d="M2.2 2.2L7 7 11.8 2.2A6.5 6.5 0 0 0 2.2 2.2z" fill="#ea4335"/><path d="M11.8 2.2L7 7l3.7 5.3c1.6-2 2.8-3.8 2.8-5.3a6.5 6.5 0 0 0-1.7-4.8z" fill="#4285f4"/><circle cx="7" cy="7" r="2.4" fill="#fff"/></svg>
<div class="a" style="left:1877px;top:355px;width:22px;height:1px;background:#dadce0"></div>
<svg class="a" style="left:1881px;top:392px" width="15" height="15" viewBox="0 0 15 15"><path d="M7.5 0v15M0 7.5h15" stroke="#1f1f1f" stroke-width="2"/></svg>
</body></html>
